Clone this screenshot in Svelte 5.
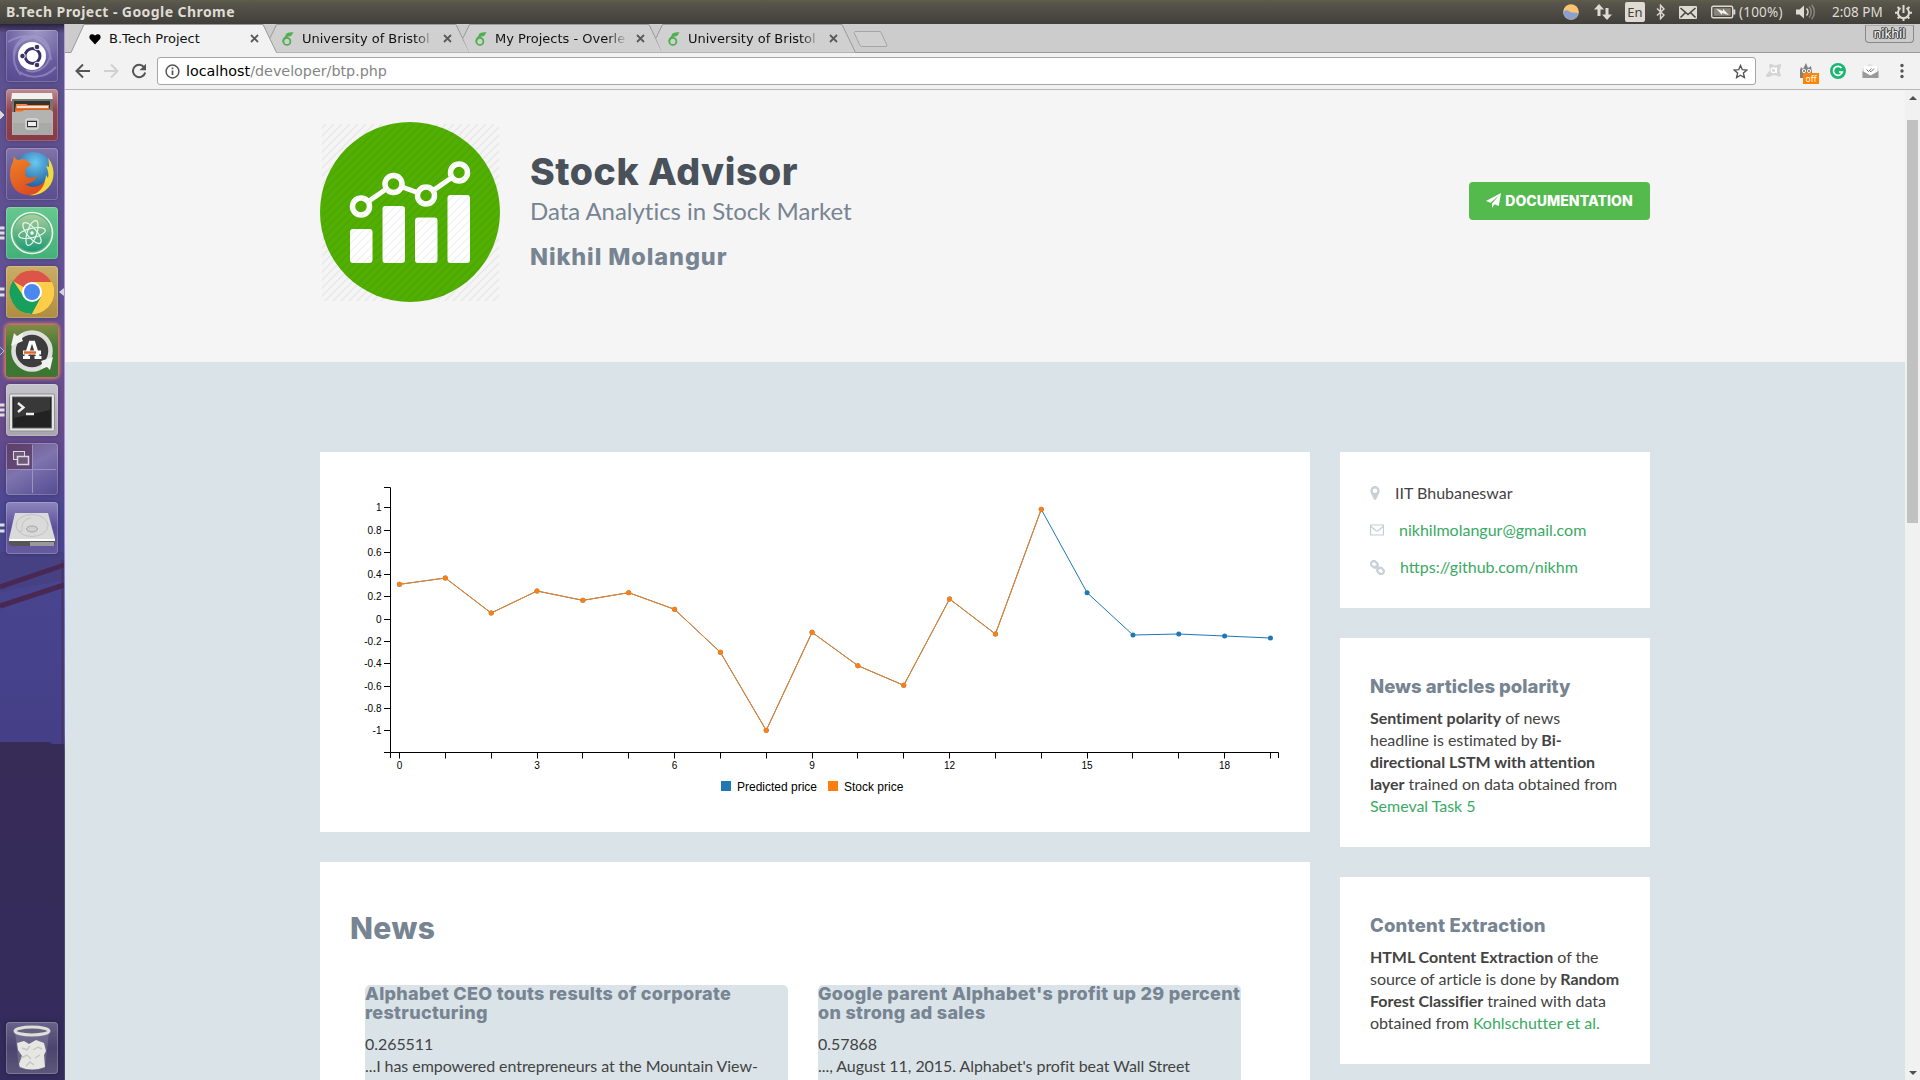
<script lang="ts">
  const actual = [403, 384, 489, 423, 451, 428, 478, 607, 841, 547, 647, 706, 447, 552, 178];
  const predicted = [...actual, 428, 555, 552, 558, 564];
  const px = (i: number) => 399.5 + i * 45.84;
  const py = (v: number) => 450 + v / 3;
  const line = (s: number[]) => s.map((v, i) => `${px(i)},${py(v)}`).join(' ');
  const yTicks = [1, 0.8, 0.6, 0.4, 0.2, 0, -0.2, -0.4, -0.6, -0.8, -1];
  const snap = (n: number) => Math.floor(n) + 0.5;
  const tabs = ['B.Tech Project', 'University of Bristol', 'My Projects - Overle', 'University of Bristol'];
  const launchers = [
    { name: 'dash', pips: 0 }, { name: 'files', pips: 1 }, { name: 'firefox', pips: 0 },
    { name: 'atom', pips: 3 }, { name: 'chrome', pips: 2 }, { name: 'updater', pips: 1 },
    { name: 'terminal', pips: 3 }, { name: 'workspaces', pips: 0 }, { name: 'disk', pips: 2 },
  ];
  const news = [
    { title: 'Alphabet CEO touts results of corporate restructuring', score: '0.265511', text: '...I has empowered entrepreneurs at the Mountain View-' },
    { title: "Google parent Alphabet's profit up 29 percent on strong ad sales", score: '0.57868', text: "..., August 11, 2015. Alphabet's profit beat Wall Street" },
  ];
</script>

<div class="screen">
  <header class="panel">
    <span class="win-title">B.Tech Project - Google Chrome</span>
    <div class="tray">
      <svg class="t-weather" width="16" height="16" viewBox="0 0 16 16"><circle cx="8" cy="8" r="7.8" fill="#f8c471" /><path d="M.3 9C1 6 4 5.500 6.500 7.500C9 9.500 12 7.500 15.600 9.500A7.800 7.800 0 0 1 .3 9z" fill="#8ba0cf" /></svg>
      <svg class="t-net" width="18" height="16" viewBox="0 0 18 16" fill="#dfdbd2"><path d="M5 0l5 5.500H6.500V12h-3V5.500H0zM13 16l-5-5.500h3.500V4h3v6.500H18z" /></svg>
      <span class="lang">En</span>
      <svg class="t-bt" width="10" height="16" viewBox="0 0 10 16" fill="none" stroke="#dfdbd2" stroke-width="1.400"><path d="M1 4.500l7 6.500-3.500 3.800V1.200L8 5 1 11.500" /></svg>
      <svg class="t-mail" width="18" height="13" viewBox="0 0 18 13"><rect width="18" height="13" rx="1" fill="#dfdbd2" /><path d="M1.500 2L9 8.500 16.500 2M1.500 11.500L6.500 6.500M16.500 11.500L11.500 6.500" fill="none" stroke="#45433d" stroke-width="1.500" /></svg>
      <svg class="t-bat" width="25" height="14" viewBox="0 0 25 14"><rect x=".7" y="1.200" width="21" height="11.600" rx="1.500" fill="none" stroke="#dfdbd2" stroke-width="1.400" /><rect x="2.700" y="3.200" width="17" height="7.600" fill="#86837b" /><rect x="22.300" y="4.500" width="2" height="5" fill="#dfdbd2" /><path d="M5 3.500l7 2.500V3.800l6 6.500-7-2.300V10z" fill="#f4f1e8" /></svg>
      <span class="pct">(100%)</span>
      <svg class="t-vol" width="20" height="16" viewBox="0 0 20 16"><path d="M0 5.500h3.500L8 1.500v13l-4.500-4H0z" fill="#dfdbd2" /><path d="M10.500 4.500a5 5 0 0 1 0 7" stroke="#dfdbd2" stroke-width="1.600" fill="none" /><path d="M13 2.500a8 8 0 0 1 0 11M15.500.8a10.500 10.500 0 0 1 0 14.400" stroke="#8a877e" stroke-width="1.500" fill="none" /></svg>
      <span class="clock">2:08 PM</span>
      <svg class="t-gear" width="17" height="17" viewBox="0 0 17 17" fill="none" stroke="#dfdbd2"><path d="M5.500 4a5.500 5.500 0 1 0 6 0" stroke-width="2" /><path d="M8.500 1v8" stroke-width="2" /><path d="M2.500 3l1.700 1.600M14.500 3l-1.700 1.600M0 8.800h2.800M14.200 8.800H17M2.700 14.500l1.700-1.700M14.300 14.500l-1.700-1.700M8.500 14.500V17" stroke-width="2" /></svg>
    </div>
  </header>

  <div class="desktop">
    <nav class="launcher">
      <svg class="wallpaper" width="65" height="1056" viewBox="0 24 65 1056">
        <defs>
          <linearGradient id="sky" x1="0" y1="0" x2="0" y2="1"><stop offset="0" stop-color="#5d5190" /><stop offset=".35" stop-color="#625194" /><stop offset=".55" stop-color="#6a4c8c" /><stop offset=".68" stop-color="#4a4792" /><stop offset="1" stop-color="#443f87" /></linearGradient>
          <linearGradient id="edge" x1="0" y1="0" x2="0" y2="1"><stop offset="0" stop-color="#b29cd8" /><stop offset=".48" stop-color="#b08ccf" /><stop offset=".56" stop-color="#6f78cf" /><stop offset=".67" stop-color="#6a62ae" /><stop offset=".69" stop-color="#544c66" /><stop offset="1" stop-color="#4b4468" /></linearGradient>
          <linearGradient id="land" x1="0" y1="0" x2="0" y2="1"><stop offset="0" stop-color="#372c58" /><stop offset="1" stop-color="#332b5c" /></linearGradient>
          <linearGradient id="shade" x1="0" y1="0" x2="0" y2="1"><stop offset="0" stop-color="#29233f" /><stop offset="1" stop-color="#29233f" stop-opacity="0" /></linearGradient>
        </defs>
        <rect y="24" width="64" height="720" fill="url(#sky)" />
        <path d="M0 552h11v-5h3v5h50v28l-64 12z" fill="#433e78" opacity=".5" />
        <path d="M62.500 560v190" stroke="#493466" stroke-width="2" />
        <path d="M0 587L64 565M0 606L64 585" stroke="#492954" stroke-width="5" />
        <path d="M0 742h50l2 2h12v336H0z" fill="url(#land)" />
        <rect y="24" width="64" height="9" fill="url(#shade)" />
        <rect x="64" y="24" width="1" height="1056" fill="url(#edge)" />
      </svg>
      {#each launchers as item (item.name)}
        <div class="tile {item.name}">
          {#if item.pips}
            <svg class="pips" width="6" height="16" viewBox="0 0 6 16">
              {#if item.pips === 1}<path d="M0 4l4 4-4 4" fill={item.name === 'updater' ? 'none' : '#d8d8d8'} stroke={item.name === 'updater' ? '#80c8ef' : '#d8d8d8'} />
              {:else if item.pips === 2}<path d="M0 5h4.500M0 11h4.500" stroke="#ddd" stroke-width="3" />
              {:else}<path d="M0 3h4.500M0 8h4.500M0 13h4.500" stroke="#ddd" stroke-width="3" />{/if}
            </svg>
          {/if}
          {#if item.name === 'chrome'}<svg class="focus" width="5" height="8" viewBox="0 0 5 8"><path d="M5 0v8L0 4z" fill="#d6d0e2" /></svg>{/if}
          <svg width="52" height="52" viewBox="0 0 52 52">
            {#if item.name === 'dash'}
              <path d="M8 28C5 6 34-2 42 16c8 18-12 30-22 24M2 12C22 0 42 8 45 30M15 45C2 30 8 10 26 8M50 37C38 50 22 48 14 42" fill="none" stroke="#aaa1d2" stroke-width="2" opacity=".55" />
              <circle cx="26" cy="26" r="14" fill="#fff" /><circle cx="26.500" cy="26" r="7.500" fill="none" stroke="#3b3067" stroke-width="3" />
              <g fill="#3b3067" stroke="#fff" stroke-width="1"><circle cx="16.500" cy="26" r="2.800" /><circle cx="31" cy="17" r="2.800" /><circle cx="31" cy="35" r="2.800" /></g>
            {:else if item.name === 'files'}
              <path d="M6 4h40l1 8H5z" fill="#f1f1ef" /><rect x="6" y="10" width="41" height="13" fill="#77756f" /><rect x="8" y="12" width="36" height="12" fill="#333" /><path d="M10 15h10l2 1h21v8H9z" fill="#ee8b4b" /><path d="M11 18h31" stroke="#fff" stroke-width="1.500" /><path d="M9 20.500h35" stroke="#d95f20" stroke-width="2" />
              <path d="M6 23h10l2-2h27l2 2v23H6z" fill="#b3b3b1" /><path d="M7 34h39v12H7z" fill="#9b9b99" opacity=".4" /><rect x="20" y="30" width="12" height="10" rx="2" fill="#aaa" stroke="#dadada" stroke-width="1.500" /><rect x="21.500" y="32.500" width="9" height="5" fill="#eee" stroke="#333" />
            {:else if item.name === 'firefox'}
              <defs><radialGradient id="ffb" cx=".55" cy=".25" r=".7"><stop offset="0" stop-color="#69c8f2" /><stop offset="1" stop-color="#154b8e" /></radialGradient><linearGradient id="ffo" x1="0" y1="0" x2=".5" y2="1"><stop offset="0" stop-color="#f08524" /><stop offset="1" stop-color="#dd4c22" /></linearGradient></defs>
              <circle cx="27" cy="25" r="21" fill="url(#ffb)" /><path d="M42 10c7 8 8 22 0 30-6 6-13 8-19 7 10-3 17-12 17-20l2 3c1-4 0-8-2-12l3 1c0-3 0-6-1-9z" fill="#f4d63d" />
              <path d="M8 8c1 3 3 4 5 4 3-2 6-1 8 1l4 3c0 2-3 2-5 4-1 3 0 5-1 7 3 4 7 3 12 1-2 5-7 8-12 8 7 5 15 3 20-3-2 8-8 14-16 14C11 47 4 38 4 27c0-6 1-10 3-13z" fill="url(#ffo)" />
            {:else if item.name === 'atom'}
              <defs><linearGradient id="atomg" x1="0" y1="0" x2="0" y2="1"><stop offset="0" stop-color="#a9cf9b" /><stop offset="1" stop-color="#1b9974" /></linearGradient></defs>
              <circle cx="26" cy="26" r="20.500" fill="#5fb57d" stroke="#eef8ef" stroke-width="1.600" /><circle cx="26" cy="26" r="18.500" fill="url(#atomg)" />
              <g fill="none" stroke="#e9f6ea" stroke-width="1.200"><ellipse cx="26" cy="26" rx="13.500" ry="4.800" transform="rotate(-12 26 26)" /><ellipse cx="26" cy="26" rx="13" ry="4.800" transform="rotate(50 26 26)" /><ellipse cx="26" cy="26" rx="13" ry="4.800" transform="rotate(108 26 26)" /></g><circle cx="26" cy="26" r="1.800" fill="#fff" />
            {:else if item.name === 'chrome'}
              <circle cx="26" cy="26" r="22" fill="#fdd04d" /><path d="M26 26L7 15A22 22 0 0 1 45.500 16H26z" fill="#db5549" /><path d="M7 14.500A22 22 0 0 0 26 48l9-17-17 0z" fill="#179f5d" /><path d="M26 48l9.500-17 .5-15h9.600A22 22 0 0 1 26 48z" fill="#fdcd48" /><circle cx="26" cy="26" r="10" fill="#fff" /><circle cx="26" cy="26" r="8" fill="#4a87ee" />
            {:else if item.name === 'updater'}
              <circle cx="26" cy="26" r="18.500" fill="#3d3d3d" stroke="#dededd" stroke-width="4.500" /><path d="M5 21l3-13 3 3 6-3-1 6 1 2zM47 32l-3 13-3-3-6 2 1-6-1-2z" fill="#f2f2f0" />
              <path d="M20 32l4.500-14.500h3L32 32" fill="none" stroke="#fff" stroke-width="3.600" /><path d="M17 32.500h7M28.500 32.500h7" stroke="#fff" stroke-width="3" /><path d="M17 27.500h18" stroke="#fff" stroke-width="4" /><path d="M18 27.500h12" stroke="#e8641b" stroke-width="2.400" />
            {:else if item.name === 'terminal'}
              <rect x="3.500" y="10" width="45" height="37" rx="1.500" fill="#e4e4e4" stroke="#909090" /><rect x="6.500" y="13" width="39" height="31" fill="#222" stroke="#666" /><path d="M8 14h36v12L8 34z" fill="#555" opacity=".45" /><path d="M12 19l5.500 4.500L12 28M20 30h8" fill="none" stroke="#eee" stroke-width="2.300" />
            {:else if item.name === 'workspaces'}
              <rect x="1" y="1" width="25" height="25" fill="#58365f" opacity=".7" /><path d="M26.500 2v48M2 26.500h48" stroke="#9d91bd" /><g fill="#6f5878" stroke="#ddd7df"><rect x="7.500" y="8.500" width="11" height="8" /><rect x="11.500" y="13.500" width="11" height="8" stroke-width="1.500" /></g>
            {:else}
              <path d="M9 11h33l7 26H3z" fill="#dadada" /><path d="M3 37h46v5l-2 2H5l-2-2z" fill="#555" /><path d="M3 37h46v2H3z" fill="#fff" /><path d="M24 40h24v4H24z" fill="#999" /><ellipse cx="26" cy="27" rx="5.500" ry="3" fill="#d0d0d0" stroke="#a5a5a5" /><ellipse cx="26" cy="23.500" rx="16" ry="11" fill="none" stroke="#c2c2c2" /><path d="M12 28q5 4 4-2 0-9 9-10" fill="none" stroke="#c4c4c4" />
            {/if}
          </svg>
        </div>
      {/each}
      <div class="tile trash">
        <svg width="52" height="52" viewBox="0 0 52 52"><path d="M9 10l4 36q13 4 26 0l4-36z" fill="#aaa6b5" opacity=".3" /><path d="M11 21l7-2 5 3 7-4 8 3 2 8-2 4 1 12q-13 5-25 0l-1-3 3-8-4-6z" fill="#e6e6e2" /><path d="M16 26l5 2 3-4M27 28l5-3 4 2M15 36l6-3 4 4M29 36l5-3M20 44l4-4 4 3" fill="none" stroke="#c6c6c2" stroke-width="1.400" /><ellipse cx="26" cy="9" rx="17" ry="4" fill="#66627a" stroke="#dededb" stroke-width="3" /></svg>
      </div>
    </nav>

    <main class="browser">
      <div class="tabstrip">
        {#each tabs as title, i (i)}
          <div class="tab" class:active={i === 0}>
            <svg class="shape" width="206" height="29" viewBox="0 0 206 29">
              {#if i === 0}<path d="M0 28.500L13 .5H192L205.500 28.500V29H0z" fill="#f2f2f2" /><path d="M0 28.500L13 .5H192L205.500 28.500" fill="none" stroke="#999" />
              {:else}<path d="M6 14L13 .5H192L205.500 28.500H12z" fill="#d0d0d0" /><path d="M6 14L12.500 .5H192L205.500 28.500" fill="none" stroke="#999" />{/if}
            </svg>
            {#if i === 0}<svg class="fav" width="12" height="12" viewBox="0 0 12 12"><path d="M6 11.500L1 6C-1 3 2-.8 6 2.500C10-.8 13 3 11 6z" /></svg>
            {:else}<svg class="fav" width="12" height="14" viewBox="0 0 12 14"><path d="M5.500 3.500C2.500 5.500 1 7.500 1 9.800" fill="none" stroke="#4fb04f" stroke-width="1.600" /><circle cx="4.900" cy="9.400" r="3.500" fill="none" stroke="#4fb04f" stroke-width="1.800" /><path d="M3.500 3.500C4 .8 7 .2 11.800.3C10 1.500 10.500 4.500 7 4.500C5.500 4.500 5 5 3.800 5.800z" fill="#4fb04f" /></svg>{/if}
            <span class="tab-text">{title}</span>
            <svg class="close" width="9" height="9" viewBox="0 0 9 9"><path d="M1 1l7 7M8 1L1 8" stroke="#5a5a5a" stroke-width="1.800" /></svg>
          </div>
        {/each}
        <svg class="newtab" width="36" height="19" viewBox="0 0 36 19"><path d="M2 1.500H27.500L34 15q.3 1.500-1 1.500H8.500L7 15.500 1 2.500z" fill="#d0d0d0" stroke="#a5a5a5" /></svg>
        <span class="profile">nikhil</span>
      </div>
      <div class="toolbar">
        <div class="navs">
          <svg width="16" height="16" viewBox="0 0 16 16" fill="none" stroke="#555" stroke-width="2"><path d="M15 8H2M8 1.500L1.500 8 8 14.500" /></svg>
          <svg width="16" height="16" viewBox="0 0 16 16" fill="none" stroke="#d0d0d0" stroke-width="2"><path d="M1 8h13M8 1.500L14.500 8 8 14.500" /></svg>
          <svg width="16" height="16" viewBox="0 0 16 16"><path d="M13.300 4.500A6.200 6.200 0 1 0 14.200 9.500" fill="none" stroke="#555" stroke-width="2" /><path d="M15 .8v6.500H8.500z" fill="#555" /></svg>
        </div>
        <div class="omnibox">
          <svg width="15" height="15" viewBox="0 0 15 15"><circle cx="7.500" cy="7.500" r="6.400" fill="none" stroke="#555" stroke-width="1.500" /><path d="M7.500 6.500v4.500M7.500 3.500v1.800" stroke="#555" stroke-width="1.700" /></svg>
          <span class="url">localhost<i>/developer/btp.php</i></span>
          <svg class="star" width="15" height="15" viewBox="0 0 15 15"><path d="M7.500 1.500l1.800 4.200 4.500.4-3.400 3 1 4.400-3.900-2.300-3.900 2.300 1-4.400-3.400-3 4.500-.4z" fill="none" stroke="#555" stroke-width="1.400" /></svg>
        </div>
        <div class="exts">
          <svg width="18" height="18" viewBox="0 0 18 18"><path d="M1 13L5 8 4 3q1-2 3-1l3 1.500L15 2q2 0 1 2l-1.500 5L16 13q0 2-2 1.500L9 13l-5 2q-4 0-3-2z" fill="#d5d5d5" /><circle cx="8.500" cy="8.300" r="2.300" fill="none" stroke="#fff" stroke-width="1.400" /><path d="M11.300 5.500v5.500" stroke="#fff" stroke-width="1.300" /></svg>
          <div class="ext"><svg width="16" height="18" viewBox="0 0 16 18"><path d="M2 16V8l1-3 2 2 3-6 2 5 3-2 1 6v6z" fill="#828282" /><circle cx="6" cy="9" r="2" fill="#fff" /><circle cx="11" cy="9" r="2" fill="#fff" /><circle cx="6" cy="9" r=".8" /><circle cx="11" cy="9" r=".8" /></svg><b>off</b></div>
          <svg width="16" height="16" viewBox="0 0 16 16"><circle cx="8" cy="8" r="8" fill="#1cb672" /><path d="M11.500 5A4.500 4.500 0 1 0 12.300 9H9" fill="none" stroke="#fff" stroke-width="1.700" /></svg>
          <svg width="17" height="15" viewBox="0 0 17 15"><path d="M.5 5L8 0l8.500 5v9H.5z" fill="#ddd" /><path d="M2 2h13v7l-6.500 3L2 9z" fill="#fff" /><path d="M.5 7l8 4.500 8-4.500v7H.5z" fill="#999" /><path d="M4.500 5.500l2 2 3-3M8 7l1 .8 3-3.300" fill="none" stroke="#777" /></svg>
          <svg width="4" height="16" viewBox="0 0 4 16" fill="#555"><circle cx="2" cy="2.500" r="1.700" /><circle cx="2" cy="8" r="1.700" /><circle cx="2" cy="13.500" r="1.700" /></svg>
        </div>
      </div>

      <div class="viewport">
        <div class="page">
          <section class="hero">
            <svg class="logo" width="180" height="180" viewBox="0 0 180 180">
              <defs><pattern id="hatch" width="8" height="8" patternUnits="userSpaceOnUse"><path d="M-1 9L9-1M-1 1l2-2M7 9l2-2" stroke="#000" stroke-opacity=".05" stroke-width="1.500" /></pattern></defs>
              <circle cx="90" cy="90" r="90" fill="#51af02" />
              <g fill="#fff"><rect x="30" y="107" width="22.500" height="34" rx="3" /><rect x="62.500" y="84" width="22.500" height="57" rx="3" /><rect x="95" y="95.500" width="22.500" height="45.500" rx="3" /><rect x="127.500" y="73" width="22.500" height="68" rx="3" /></g>
              <path d="M41 84.500L73.500 62 106 73.500 139 50.500" stroke="#fff" stroke-width="5" fill="none" />
              <g fill="#51af02" stroke="#fff" stroke-width="5.500"><circle cx="41" cy="84.500" r="8.500" /><circle cx="73.500" cy="62" r="8.500" /><circle cx="106" cy="73.500" r="8.500" /><circle cx="139" cy="50.500" r="8.500" /></g>
              <rect x="2" y="2" width="177" height="177" fill="url(#hatch)" />
            </svg>
            <div class="intro"><h1>Stock Advisor</h1><p>Data Analytics in Stock Market</p><h2>Nikhil Molangur</h2></div>
            <a class="btn" href="#docs"><svg width="15" height="15" viewBox="0 0 15 15" fill="#fff"><path d="M15 0L12.800 13 8.500 11.200 6 15V10.500L13 2.500 4.500 9.700 0 8z" /></svg><span>DOCUMENTATION</span></a>
          </section>
          <div class="columns">
            <div class="primary">
              <section class="card chart">
                <svg width="990" height="380" viewBox="320 452 990 380">
                  <path d="M384 487.500H390.500V752.500H384M390.500 758V752.500H1278.500V758" fill="none" stroke="#000" />
                  {#each yTicks as t}
                    <path d="M384 {snap(619.3 - t * 111.6)}H390.500" stroke="#000" />
                    <text x="381.500" y={622.8 - t * 111.6} text-anchor="end">{t}</text>
                  {/each}
                  {#each predicted as _, i}
                    <path d="M{snap(px(i))} 752.500v6" stroke="#000" />
                    {#if i % 3 === 0}<text x={px(i)} y="768.500" text-anchor="middle">{i}</text>{/if}
                  {/each}
                  <polyline points={line(predicted)} fill="none" stroke="#1f77b4" />
                  {#each predicted as v, i}<circle cx={px(i)} cy={py(v)} r="2.500" fill="#1f77b4" />{/each}
                  <polyline points={line(actual)} fill="none" stroke="#ff7f0e" />
                  {#each actual as v, i}<circle cx={px(i)} cy={py(v)} r="2.500" fill="#ff7f0e" />{/each}
                  <rect x="721" y="781" width="10" height="10" fill="#1f77b4" /><text class="legend" x="737" y="791">Predicted price</text>
                  <rect x="828" y="781" width="10" height="10" fill="#ff7f0e" /><text class="legend" x="844" y="791">Stock price</text>
                </svg>
              </section>
              <section class="card newsbox">
                <h2>News</h2>
                <div class="articles">
                  {#each news as n}<article><h3>{n.title}</h3><p>{n.score}</p><p>{n.text}</p></article>{/each}
                </div>
              </section>
            </div>
            <aside>
              <section class="card contact">
                <div><svg width="10" height="14" viewBox="0 0 10 14"><path fill-rule="evenodd" d="M5 0a4.700 4.700 0 0 1 4.700 4.700C9.700 7 8 9 6.300 13q-1.300 1.800-2.600 0C2 9 .3 7 .3 4.700A4.700 4.700 0 0 1 5 0zM5 2.500a2.300 2.300 0 1 0 0 4.600 2.300 2.300 0 0 0 0-4.600z" fill="#c9d0d7" /></svg><span>IIT Bhubaneswar</span></div>
                <div><svg width="14" height="12" viewBox="0 0 14 12"><path d="M.5 1h13v10H.5zM1 2.500l4.500 4q1.500 1 3 0l4.500-4" fill="none" stroke="#c4cdd6" stroke-width="1.200" /></svg><a href="#mail">nikhilmolangur@gmail.com</a></div>
                <div><svg class="chain" width="15" height="15" viewBox="0 0 15 15" fill="none" stroke="#c9d0d7" stroke-width="2.200"><rect x="1" y="1.700" width="7" height="5.400" rx="2.700" transform="rotate(40 4.500 4.200)" /><rect x="7" y="8.100" width="7" height="5.400" rx="2.700" transform="rotate(40 10.500 10.800)" /><path d="M5.500 5.500l4 4" /></svg><a href="#git">https://github.com/nikhm</a></div>
              </section>
              <section class="card note polarity"><h3>News articles polarity</h3><p><b>Sentiment polarity</b> of news<br />headline is estimated by <b>Bi-<br />directional LSTM with attention<br />layer</b> trained on data obtained from<br /><a href="#task">Semeval Task 5</a></p></section>
              <section class="card note extraction"><h3>Content Extraction</h3><p><b>HTML Content Extraction</b> of the<br />source of article is done by <b>Random<br />Forest Classifier</b> trained with data<br />obtained from <a href="#paper">Kohlschutter et al.</a></p></section>
            </aside>
          </div>
        </div>
        <div class="scrollbar"><i class="up"></i><div class="thumb"></div><i class="down"></i></div>
      </div>
    </main>
  </div>
</div>

<style>
  :global(body) { margin: 0; overflow: hidden; }
  * { box-sizing: border-box; }
  h1, h2, h3, p { margin: 0; }
  svg { flex: none; display: block; }
  a { text-decoration: none; color: #3aaa64; }
  .screen { width: 1920px; height: 1080px; display: flex; flex-direction: column; overflow: hidden; font-family: Lato, sans-serif; color: #434343; }
  .panel { height: 24px; flex: none; display: flex; justify-content: space-between; align-items: center; padding: 0 8px 0 6px; background: linear-gradient(#5f5c4d, #55534a 20%, #403f3a); color: #dfdbd2; font-family: "Noto Sans", sans-serif; }
  .win-title { font-size: 14px; font-weight: 700; line-height: 22px; white-space: nowrap; letter-spacing: 0.43px; }
  .tray { display: flex; align-items: center; font-size: 14px; height: 24px; }
  .t-net { margin-left: 15px; }
  .lang { margin-left: 13px; width: 20px; height: 20px; border-radius: 2px; background: #dfdbd2; color: #45433d; font-size: 13px; line-height: 20px; text-align: center; }
  .t-bt { margin-left: 11px; }
  .t-mail { margin-left: 13px; }
  .t-bat { margin-left: 14px; }
  .pct { margin-left: 3px; width: 46px; white-space: nowrap; font-size: 13.500px; letter-spacing: 0.2px; }
  .t-vol { margin-left: 11px; }
  .clock { margin-left: 16px; width: 52px; white-space: nowrap; font-size: 13.500px; }
  .t-gear { margin-left: 11px; }
  .desktop { flex: 1; display: flex; min-height: 0; }
  .launcher { width: 65px; flex: none; position: relative; display: flex; flex-direction: column; gap: 7px; padding: 6px 0 6px 6px; }
  .wallpaper { position: absolute; left: 0; top: 0; }
  .tile { width: 52px; height: 52px; flex: none; position: relative; border-radius: 4px; background: linear-gradient(#8075aa, #6a5d9b 45%, #5b4e8f); box-shadow: inset 0 0 0 1px #ffffff33, 0 0 4px #00000044; }
  .dash { background: radial-gradient(circle at 60% 0, #9f99c4, #675b9e 60%, #54478e); }
  .files { background: linear-gradient(#bf8d94, #93444f 40%, #873b46); }
  .atom { background: linear-gradient(#67c88f, #43b079); }
  .chrome { background: linear-gradient(#c9ae68, #ad8d41); }
  .updater { background: linear-gradient(#7f8b46, #3f7733 45%, #3b7632); box-shadow: 0 0 3px 2px #d0795f; }
  .terminal { background: linear-gradient(#c5c3cc, #a7a5ae); }
  .workspaces { background: linear-gradient(150deg, #6f5789, #7e74ae 45%, #544b93); }
  .disk { background: linear-gradient(#8c85bd, #5c509b 50%, #665aa0); }
  .trash { margin-top: auto; background: linear-gradient(#69638a, #4b446f 50%, #5d577b); }
  .pips { position: absolute; left: -6px; top: 18px; }
  .focus { position: absolute; left: 53px; top: 22px; }
  .browser { flex: 1; min-width: 0; display: flex; flex-direction: column; }
  .tabstrip { height: 29px; flex: none; display: flex; position: relative; padding-left: 6px; background: #cccccc; box-shadow: inset 0 -1px #999; font: 13px/29px "DejaVu Sans", sans-serif; color: #111; }
  .tab { width: 193px; position: relative; display: flex; align-items: center; padding-left: 18px; }
  .shape { position: absolute; left: 0; top: 0; }
  .fav, .close, .tab-text { position: relative; }
  .fav { width: 12px; }
  .tab-text { margin-left: 8px; width: 134px; height: 29px; white-space: nowrap; mask-image: linear-gradient(90deg, #000 84%, transparent 99%); }
  .active { z-index: 2; }
  .active .tab-text { mask-image: none; }
  .close { margin-left: 6.500px; }
  .newtab { margin: 6px 0 0 10px; }
  .profile { margin: 1px 6px 0 auto; width: 49px; height: 18px; border: 1px solid #888; border-top-color: #aaa; border-radius: 0 0 4px 4px; text-align: center; font: 12.500px/16px "Noto Sans", sans-serif; color: #fff; text-shadow: 1px 0 #444, -1px 0 #444, 0 1px #444, 0 -1px #444, 1px 1px #555, -1px -1px #555; }
  .toolbar { height: 37px; flex: none; display: flex; align-items: center; background: #f2f2f2; border-bottom: 1px solid #b6b6b6; padding: 0 2px 0 10px; }
  .navs { display: flex; gap: 12px; width: 82px; flex: none; }
  .omnibox { width: 1599px; flex: none; height: 28px; border: 1px solid #a6a6a6; border-radius: 3px; background: #fff; display: flex; align-items: center; padding: 0 7px; }
  .url { margin-left: 6px; font: 14.300px/26px "DejaVu Sans", sans-serif; color: #000; }
  .url i { font-style: normal; color: #858585; }
  .star { margin-left: auto; }
  .exts { width: 160px; margin-left: 2px; display: grid; grid-template-columns: repeat(5, 32px); align-items: center; justify-items: center; }
  .ext { position: relative; }
  .ext b { position: absolute; left: 5px; top: 11px; width: 16px; height: 11px; background: #ff8400; color: #fff; font: 8.500px/11px "Noto Sans", sans-serif; text-align: center; }
  .viewport { flex: 1; min-height: 0; display: flex; overflow: hidden; }
  .page { width: 1840px; height: 990px; overflow: hidden; background: #dae3e8; }
  .scrollbar { width: 15px; background: #f1f1f1; display: flex; flex-direction: column; align-items: center; padding: 6px 0 5px; }
  .thumb { width: 11px; height: 403px; margin-top: 20px; background: #c1c1c1; }
  .up, .down { border: 4px solid transparent; height: 0; }
  .up { border-bottom-color: #505050; border-top: 0; }
  .down { border-top-color: #505050; border-bottom: 0; margin-top: auto; }
  .hero { height: 272px; display: flex; align-items: flex-start; padding: 32px 255px 0; background: #f5f5f5; }
  .intro { margin: 27px 0 0 30px; flex: 1; }
  h1, h2, h3, .btn { font-family: Inter, sans-serif; font-weight: 800; }
  h1 { font-size: 37.500px; line-height: 46px; color: #49515a; white-space: nowrap; letter-spacing: 0.55px; }
  .intro p { font-size: 24px; line-height: 30px; color: #778492; margin-top: 1px; letter-spacing: -0.03px; }
  h2, h3 { color: #778492; }
  .intro h2 { font-size: 23.500px; line-height: 30px; margin-top: 16px; letter-spacing: 0.9px; }
  .btn { margin-top: 60px; width: 181px; height: 38px; border-radius: 4px; background: #54ba4e; color: #fff; display: flex; align-items: center; justify-content: center; gap: 4px; font-size: 14px; padding-bottom: 1px; letter-spacing: 0.06px; }
  .columns { display: flex; gap: 30px; padding: 90px 255px 0; }
  .primary { width: 990px; display: flex; flex-direction: column; gap: 30px; }
  .card { background: #fff; }
  .chart { height: 380px; }
  .chart text { font: 10px "Liberation Sans", sans-serif; fill: #000; }
  .chart .legend { font-size: 12px; }
  .newsbox { height: 600px; padding: 46px 30px 0; }
  .newsbox h2 { font-size: 30px; line-height: 40px; letter-spacing: 0.4px; }
  .articles { display: flex; gap: 30px; padding: 37px 15px 0; }
  article { width: 423px; height: 400px; background: #dae3e8; border-radius: 5px; }
  article h3 { font-size: 18px; line-height: 19px; margin: -1px 0 11px; letter-spacing: 0.31px; white-space: nowrap; width: 423px; white-space: normal; }
  article p, .note p { font-size: 16px; line-height: 22px; white-space: nowrap; letter-spacing: -0.06px; }
  .note p { letter-spacing: -0.03px; }
  aside { width: 310px; display: flex; flex-direction: column; gap: 30px; }
  .contact { height: 156px; padding: 30px 30px 0; display: flex; flex-direction: column; gap: 15px; }
  .contact div { display: flex; align-items: center; gap: 15px; height: 22px; font-size: 16px; line-height: 22px; }
  .note { padding: 34px 30px 0; }
  .polarity { height: 209px; }
  .extraction { height: 187px; }
  .note h3 { font-size: 18.500px; line-height: 28px; margin-bottom: 7px; white-space: nowrap; }
  .extraction h3 { letter-spacing: 0.2px; }
</style>
